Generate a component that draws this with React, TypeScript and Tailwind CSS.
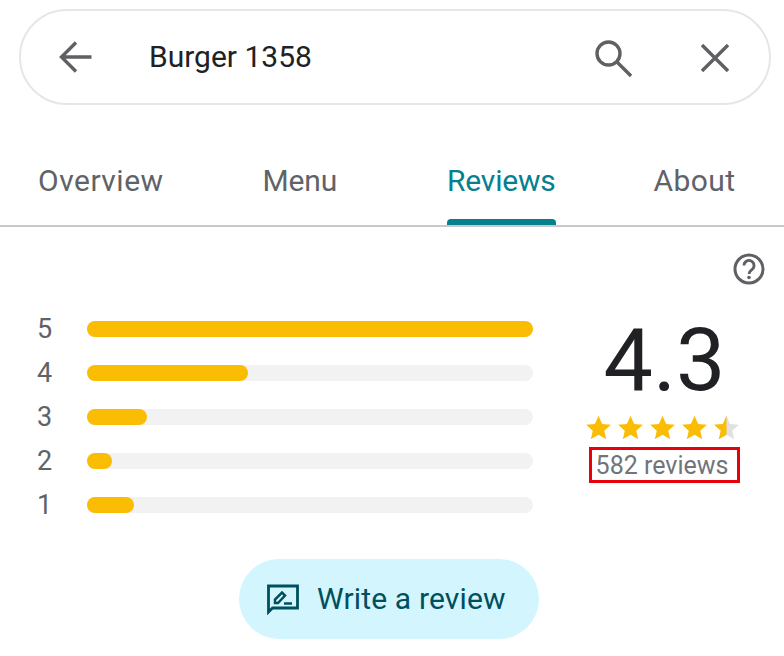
const font = "[font-family:Roboto,'Liberation_Sans',sans-serif]";

function Star({ half = false }: { half?: boolean }) {
  const d = "M12 1.6l3.2 7.2 7.8.8-5.9 5.2 1.7 7.7L12 18.5l-6.8 4 1.7-7.7L1 9.6l7.8-.8z";
  return (
    <svg width="27" height="27" viewBox="0 0 24 24" className="shrink-0">
      <path d={d} fill={half ? "#e1e1e1" : "#fbbc04"} />
      {half && <path d="M12 1.6V18.5l-6.8 4 1.7-7.7L1 9.6l7.8-.8z" fill="#fbbc04" />}
    </svg>
  );
}

function Bar({ n, w }: { n: number; w: number }) {
  return (
    <div className="flex h-[44px] items-center">
      <span className="w-[50px] text-[27px] leading-none text-[#5f6368]">{n}</span>
      <div className="h-4 w-[446px] rounded-full bg-[#f2f2f2]">
        <div className="h-4 rounded-full bg-[#fbbc04]" style={{ width: w }} />
      </div>
    </div>
  );
}

export default function App() {
  return (
    <div className={`h-[656px] w-[784px] overflow-hidden bg-white ${font}`}>
      <div className="px-[19px] pt-[9px]">
        <div className="flex h-[96px] w-[752px] items-center rounded-full border-2 border-[#e6e6e6] pl-[38px] pr-[39px]">
          <svg width="33" height="32" viewBox="0 0 33 32" fill="none" stroke="#5f6063" strokeWidth="3.400" className="shrink-0">
            <path d="M32.500 16H4M17 1.500 2.500 16 17 30.500" />
          </svg>
          <span className="ml-[57px] flex-1 text-[30px] leading-none text-[#202124]">Burger 1358</span>
          <svg width="37" height="37" viewBox="0 0 37 37" fill="none" stroke="#5f6063" strokeWidth="3.400" className="mt-[3px] shrink-0">
            <circle cx="13.500" cy="13.500" r="11.500" />
            <path d="M22 22l14 14" />
          </svg>
          <svg width="28" height="28" viewBox="0 0 28 28" fill="none" stroke="#5f6063" strokeWidth="3.400" className="ml-[69px] mt-[2px] mr-[1px] shrink-0">
            <path d="M1 1l26 26M27 1 1 27" />
          </svg>
        </div>
      </div>

      <div className="flex h-[122px] border-b-2 border-[#c9c9c9] pl-[38px] text-[30px] leading-none text-[#5f6368]">
        <div className="pt-[61px] tracking-[0.5px]">Overview</div>
        <div className="ml-[99px] pt-[61px] tracking-[-0.2px]">Menu</div>
        <div className="relative ml-[110px] pt-[61px] tracking-[-0.2px] text-[#05808f]">
          Reviews
          <div className="absolute bottom-0 left-0 right-0 h-[6px] rounded-t-[4px] bg-[#05808f]" />
        </div>
        <div className="ml-[98px] pt-[61px] tracking-[0.4px]">About</div>
      </div>

      <div className="flex justify-end pr-[19px] pt-[26px]">
        <svg width="32" height="32" viewBox="0 0 32 32" fill="none">
          <circle cx="16" cy="16" r="14" stroke="#5f6063" strokeWidth="3" />
          <path d="M11 12.500a5 5 0 1 1 8 4c-2 1.500-3 2.200-3 4.500" stroke="#5f6063" strokeWidth="2.800" />
          <circle cx="16" cy="24.500" r="1.800" fill="#5f6063" />
        </svg>
      </div>

      <div className="flex pl-[37px] pt-[22px]">
        <div className="flex flex-col">
          <Bar n={5} w={446} />
          <Bar n={4} w={161} />
          <Bar n={3} w={60} />
          <Bar n={2} w={25} />
          <Bar n={1} w={47} />
        </div>
        <div className="ml-[53px] flex w-[153px] flex-col items-center pt-[7px]">
          <div className="pl-[4px] text-[88px] font-normal leading-[92px] text-[#202124]">4.3</div>
          <div className="mt-[8px] flex h-[27px] w-[155px] shrink-0 justify-between">
            <Star /><Star /><Star /><Star /><Star half />
          </div>
          <div className="ml-[3px] mt-[6px] flex h-[36px] w-[151px] shrink-0 items-center justify-center border-[3px] border-[#e8000d] pr-[4px] text-[25px] leading-none text-[#70757a]">
            582 reviews
          </div>
        </div>
      </div>

      <div className="pl-[239px] pt-[32px]">
        <button className="flex h-20 w-[300px] items-center rounded-full bg-[#d3f5fe] pl-[28px] text-[30px] leading-none tracking-[0.15px] text-[#004f5e]">
          <svg width="33" height="31" viewBox="0 0 33 31" fill="none" className="mr-[17px] shrink-0">
            <path d="M1.500 28V2h29v22H5.500z" stroke="#004f5e" strokeWidth="2.800" />
            <path d="M8 19v-3.500l7-7 3 3-7 7.500zM17 19.500h8" stroke="#004f5e" strokeWidth="2.500" />
          </svg>
          Write a review
        </button>
      </div>
    </div>
  );
}
